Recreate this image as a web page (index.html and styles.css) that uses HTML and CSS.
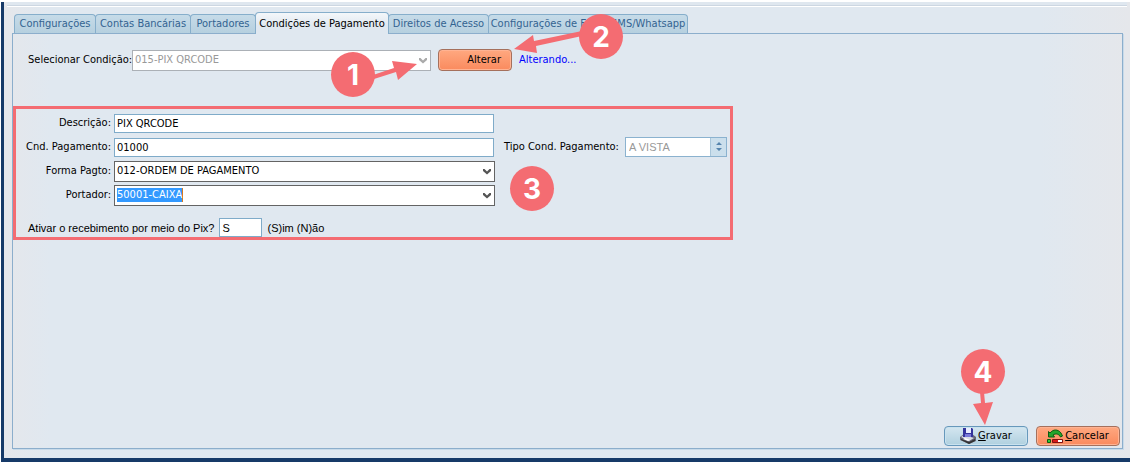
FILE: index.html
```html
<!DOCTYPE html>
<html lang="pt-BR">
<head>
<meta charset="utf-8">
<title>Condições de Pagamento</title>
<link rel="stylesheet" href="styles.css">
</head>
<body>
<main class="window">
  <div class="top-rule"></div>
  <nav class="tabs" role="tablist">
    <button class="tab" role="tab">Configurações</button>
    <button class="tab" role="tab">Contas Bancárias</button>
    <button class="tab" role="tab">Portadores</button>
    <button class="tab active" role="tab" aria-selected="true">Condições de Pagamento</button>
    <button class="tab" role="tab">Direitos de Acesso</button>
    <button class="tab" role="tab">Configurações de Email/SMS/Whatsapp</button>
  </nav>
  <form class="panel">
    <div class="picker">
      <label for="condicao">Selecionar Condição:</label>
      <span class="combo disabled">
        <select id="condicao" disabled><option>015-PIX QRCODE</option></select>
        <svg class="chevron" width="8" height="7" viewBox="0 0 8 7"><path d="M0 1h1.500L4 3.500 6.500 1H8v2L4 6.500 0 3z"/></svg>
      </span>
      <button type="button" class="btn orange alter">Alterar</button>
      <span class="status">Alterando...</span>
    </div>

    <div class="details">
      <div class="fields">
        <label for="descricao">Descrição:</label>
        <input id="descricao" class="text" value="PIX QRCODE">
        <label for="cnd">Cnd. Pagamento:</label>
        <input id="cnd" class="text" value="01000">
        <div class="kind">
          <label for="tipo">Tipo Cond. Pagamento:</label>
          <span class="spinner">
            <input id="tipo" value="A VISTA" disabled>
            <span class="spin"><svg width="8" height="12" viewBox="0 0 8 12"><path d="M1 4l3-3 3 3zM1 7h6l-3 3z"/></svg></span>
          </span>
        </div>
        <label for="forma">Forma Pagto:</label>
        <span class="combo wide">
          <select id="forma"><option>012-ORDEM DE PAGAMENTO</option></select>
          <svg class="chevron" width="8" height="7" viewBox="0 0 8 7"><path d="M0 1h1.500L4 3.500 6.500 1H8v2L4 6.500 0 3z"/></svg>
        </span>
        <label for="portador">Portador:</label>
        <span class="combo wide">
          <select id="portador" class="selected"><option>50001-CAIXA</option></select>
          <svg class="chevron" width="8" height="7" viewBox="0 0 8 7"><path d="M0 1h1.500L4 3.500 6.500 1H8v2L4 6.500 0 3z"/></svg>
        </span>
      </div>
      <div class="pix">
        <label for="pix">Ativar o recebimento por meio do Pix?</label>
        <input id="pix" class="text" value="S">
        <span>(S)im (N)ão</span>
      </div>
      <b class="badge three">3</b>
    </div>

    <div class="actions">
      <button type="button" class="btn blue">
        <svg width="16" height="16" viewBox="0 0 16 16">
          <path fill="#667" d="M0 9l4-3h8l4 3v4l-7 3-9-4z"/>
          <path fill="#d8dce4" d="M1 9l3-2 10 3-5 3z"/>
          <path fill="#333" d="M1 11l8 3 6-3v2l-6 3-8-4z"/>
          <path fill="#34349c" d="M3 0h9l1 1v8H3z"/>
          <path fill="#e8ecff" d="M6 0h5v5H6z"/>
          <path fill="#7a7ad8" d="M5 6h6v3H5z"/>
          <path fill="#fff" d="M3 11l2-1 5 2-2 1z"/>
        </svg>
        <span><u>G</u>ravar</span>
      </button>
      <button type="button" class="btn orange">
        <svg width="16" height="14" viewBox="0 0 16 14">
          <path fill="#23a52b" stroke="#0b5a12" d="M1.500 8V2.500L3 4c3-4 8-4 11 0l1.500 3-2 1C12 5 9 4 6 6l1.500 2z"/>
          <path fill="#2fc437" stroke="#0b5a12" d="M.5 10.500h3v3h-3z"/>
          <path fill="#d71818" stroke="#801010" d="M5.500 10.500h10v3h-10z"/>
          <path fill="#fff" d="M11 11h4v2h-4z"/>
        </svg>
        <span><u>C</u>ancelar</span>
      </button>
      <div class="callout">
        <b class="badge">4</b>
        <svg width="20" height="34" viewBox="0 0 20 34"><path d="M7 0h4l1 11 8-1-8 23L0 12l8-1z"/></svg>
      </div>
    </div>
  </form>
  <svg class="arrows" width="620" height="90" viewBox="0 0 620 90">
    <path d="M373 75l21-7-2-7 25 3-19 16-2-8-22 7z"/>
    <path d="M582 31l-48 10-1-6-19 14 23 4-1-7 46-10z"/>
  </svg>
  <b class="badge one">1</b>
  <b class="badge two">2</b>
</main>
</body>
</html>
```
FILE: styles.css
```css
* { box-sizing: border-box; }
body {
  margin: 0;
  background: #fff;
  font: 11px/14px "DejaVu Sans Condensed", "Noto Sans", sans-serif;
  color: #000;
}
button, input, select { font: inherit; color: inherit; margin: 0; }
svg { display: block; }

.window {
  position: relative;
  display: flex;
  flex-direction: column;
  min-height: calc(100vh - 2px);
  margin: 2px 0 0 1px;
  padding: 0 7px 9px 8px;
  border-left: 3px solid #163a68;
  border-bottom: 4px solid #163a68;
  background: linear-gradient(90deg, #e5e7eb, #e0e8f0 4%, #e0e8f0 92%, #e5e7eb);
}
.top-rule {
  height: 5px;
  margin: 0 -4px 0 -5px;
  border-top: 3px solid #dfe7ef;
  border-bottom: 1px solid #fff;
  background: #cdd7e2;
}

.tabs {
  display: grid;
  grid-template-columns: 81px 95px 65px 133px 100px 199px;
  align-items: end;
  height: 26px;
  padding-left: 2px;
}
.tab {
  height: 19px;
  padding: 0;
  margin-right: -1px;
  border: 1px solid #86aecb;
  border-bottom: 0;
  border-radius: 4px 4px 0 0;
  background: linear-gradient(#c6dbe8, #b6d0df);
  color: #336391;
  white-space: nowrap;
}
.tab.active {
  position: relative;
  height: 22px;
  margin-bottom: -1px;
  background: linear-gradient(#f4f7fa, #e0e8f0 60%);
  color: #000;
}

.panel {
  flex: 1;
  display: flex;
  flex-direction: column;
  border: 1px solid #8caecc;
  box-shadow: 1px 1px 0 #c8dae9;
}

.picker { display: flex; align-items: center; height: 22px; margin-top: 15px; padding-left: 15px; }
.picker label { width: 104px; white-space: nowrap; }
.picker .combo { width: 299px; }

.combo { display: grid; }
.combo.wide { margin-right: -1px; }
.combo select {
  grid-area: 1 / 1;
  width: 100%;
  height: 21px;
  padding: 0 2px;
  appearance: none;
  border: 1px solid #646464;
  border-radius: 0;
  background-color: #fff;
}
.combo .chevron { grid-area: 1 / 1; place-self: center end; margin-right: 4px; fill: #555; pointer-events: none; }
.combo.disabled select { border-color: #abb0b6; color: #999; opacity: 1; }
.combo.disabled .chevron { fill: #aaa; }
.combo select.selected {
  color: #fff;
  background-image: linear-gradient(90deg, #39f 65px, #d77a20 65px);
  background-position: 2px 2px;
  background-size: 66px 14px;
  background-repeat: no-repeat;
}
.combo option { color: #000; }

.btn {
  display: flex;
  align-items: center;
  justify-content: center;
  gap: 2px;
  width: 84px;
  height: 20px;
  padding: 0;
  border-radius: 4px;
}
.orange {
  border: 1px solid #a5705c;
  background: linear-gradient(#ffa880, #fa8a5e);
  box-shadow: inset 0 0 0 1px #ffb393;
}
.blue {
  border: 1px solid #6798bb;
  background: linear-gradient(#d4e6f0, #b0d0df);
  box-shadow: inset 0 0 0 1px #c9e2ef;
}
.alter { width: 74px; height: 22px; margin: 0 7px; justify-content: flex-end; padding-right: 10px; }
.status { color: #00f; }

.details {
  position: relative;
  width: 720px;
  max-width: 100%;
  margin-top: 35px;
  padding: 2px 3px 0 12px;
  border: 3px solid #f46c72;
}
.fields {
  display: grid;
  grid-template-columns: 83px 380px 1fr;
  grid-auto-rows: 24px;
  column-gap: 3px;
  align-items: center;
}
.fields > label { grid-column: 1; justify-self: end; white-space: nowrap; }
.text {
  width: 100%;
  height: 19px;
  padding: 0 2px;
  border: 1px solid #7fabc9;
  background: #fff;
}
.kind { display: flex; justify-content: space-between; align-items: center; padding-left: 7px; }
.spinner { display: flex; width: 102px; height: 20px; border: 1px solid #8bb2cf; background: #fff; }
.spinner input {
  width: 84px;
  padding: 0 3px;
  border: 0;
  background: none;
  color: #999;
  font-family: "Liberation Sans", sans-serif;
}
.spin {
  display: grid;
  place-items: center;
  flex: 1;
  border-left: 1px solid #a9c6da;
  background: #cbdfec;
}
.spin svg { fill: #5584ad; }

.pix {
  display: flex;
  align-items: center;
  gap: 5px;
  margin-top: 11px;
  font-family: "Liberation Sans", sans-serif;
}
.pix .text { width: 43px; }

.actions {
  position: relative;
  display: flex;
  justify-content: flex-end;
  gap: 8px;
  margin-top: auto;
  padding: 0 2px 2px 0;
}
.callout {
  position: absolute;
  right: 117px;
  bottom: 22px;
  display: grid;
  justify-items: center;
  pointer-events: none;
}
.callout svg { margin-top: -2px; }

.callout svg, .arrows { fill: #f46c72; }
.badge {
  display: grid;
  place-items: center;
  width: 44px;
  height: 45px;
  border-radius: 50%;
  background: #f46c72;
  color: #fff;
  font: bold 28px/34px Inter, "Open Sans", sans-serif;
}
.arrows { position: absolute; left: -4px; top: -2px; pointer-events: none; }
.one, .two, .three { position: absolute; }
.one { left: 327px; top: 50px; }
.two { left: 575px; top: 12px; }
.three { left: 494px; top: 57px; }
```
